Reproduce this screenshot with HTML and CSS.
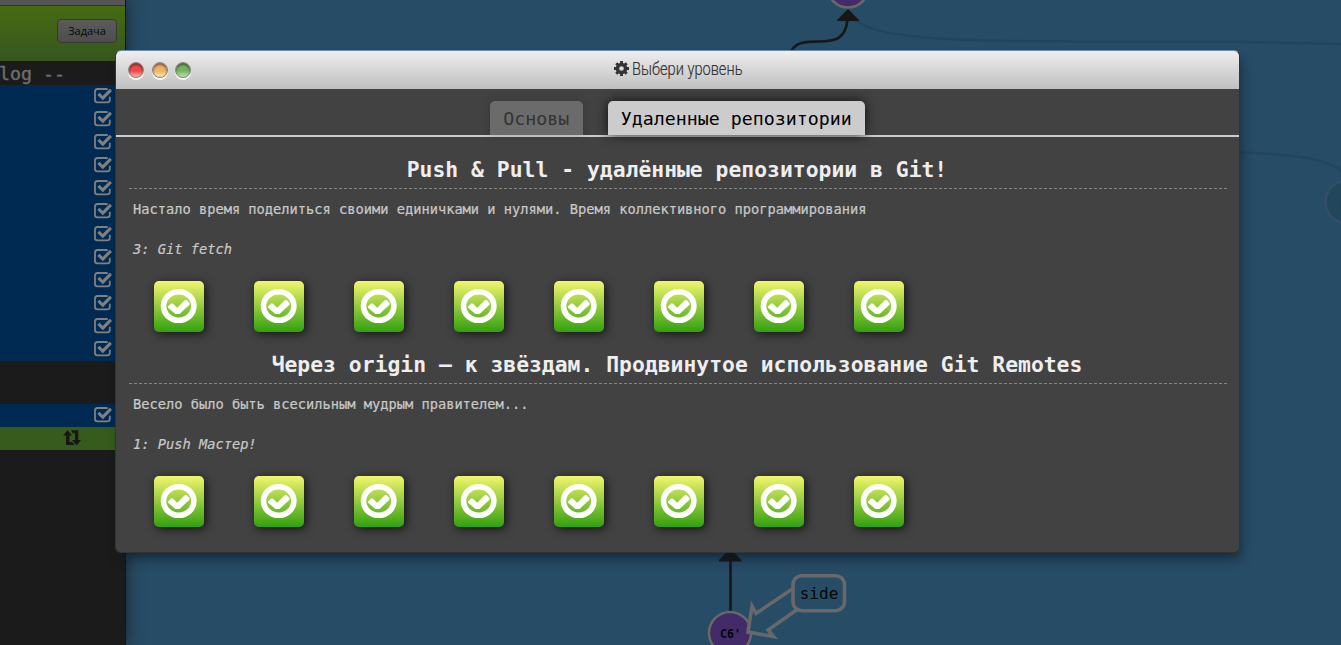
FILE: index.html
```html
<!DOCTYPE html>
<html lang="ru">
<head>
<meta charset="utf-8">
<title>Выбери уровень</title>
<link rel="stylesheet" href="styles.css">
</head>
<body>
<svg class="defs" aria-hidden="true">
  <symbol id="box" viewBox="0 0 18 16"><path d="M13.6 1.7Q13.2 1 12.3 1H3.4Q1 1 1 3.4V12.1Q1 14.4 3.4 14.4H13.4Q15.8 14.4 15.8 12.1V8.8" fill="none" stroke="currentColor" stroke-width="1.8"/><path d="M4.4 5.8L8.8 10L16.9 1.8" fill="none" stroke="currentColor" stroke-width="3.1"/></symbol>
  <symbol id="done" viewBox="0 0 50 51"><ellipse cx="24.7" cy="25" rx="15.2" ry="14.3" fill="none" stroke="#fff" stroke-width="5.6"/><path d="M14 25.5L17 22.4L18.8 22.6L23.2 26.7L31 19L32.6 19L35.6 22.1L35.4 23.7L26.6 32.1Q26 32.9 25 33H21.9Q21 32.9 20.3 32.1L14.1 26.8Z" fill="#fff"/></symbol>
</svg>
<div class="app">
  <aside class="sidebar">
    <div class="strip"></div>
    <div class="toolbar"><span class="task">Задача</span></div>
    <div class="log">log --</div>
    <div class="commands" id="commands"></div>
    <div class="gap"></div>
    <div class="row"><svg><use href="#box"/></svg></div>
    <div class="row active"><svg viewBox="0 0 18 16"><path d="M0 5.5L4.6 .3L9 5.5H6.5V12H9.5L11.5 15H3V5.5ZM8 .3H15.3V10H18L13.6 15.4L9 10H12V3.3H9.8Z" fill="#171717"/></svg></div>
  </aside>
  <main class="canvas">
    <svg class="graph" viewBox="126 0 1215 645">
      <g fill="none" stroke="#23455b" stroke-width="2.5">
        <path d="M848 10C862 45 960 41 1220 41.5Q1290 43 1341 44"/>
        <path d="M1230 152C1285 154 1325 156 1344 173"/>
        <circle cx="1347" cy="202" r="21.5" fill="#23475a" stroke="#334f67"/>
        <path d="M1342 197Q1338 201 1342 206"/>
      </g>
      <path d="M791 51C798 41 806 42 818 41.5C835 41 845 40 847.5 20" fill="none" stroke="#171717" stroke-width="2.6"/>
      <path d="M848 9L859 20V21H837V20Z" fill="#171717"/>
      <circle cx="848" cy="-13" r="20.5" fill="#432a68" stroke="#68676a" stroke-width="2.5"/>
      <path d="M730.5 560V615" stroke="#171717" stroke-width="2.6"/>
      <path d="M730 549L741.5 560V561.5H719V560Z" fill="#171717"/>
      <circle cx="730" cy="633" r="21" fill="#432a68" stroke="#68676a" stroke-width="2.5"/>
      <text class="commit" x="730.5" y="638" text-anchor="middle">C6'</text>
      <g fill="#274c65" stroke="#68676a" stroke-width="3.6">
        <path d="M793 588.5L756 613.5L752 606L748 632L773.5 636.5L768 630L798 609"/>
        <rect x="793" y="575.7" width="51.5" height="35" rx="9"/>
      </g>
      <text class="branch" x="819" y="599" text-anchor="middle">side</text>
    </svg>
  </main>
</div>
<section class="window">
  <header class="titlebar">
    <div class="lights"><i class="red"></i><i class="amber"></i><i class="green"></i></div>
    <h1><svg class="gear" viewBox="-7 -7 14 14"><circle r="3.8" fill="none" stroke="#333" stroke-width="3.2"/><path d="M0-7V-4M0 4V7M-7 0H-4M4 0H7M-4.9-4.9L-3-3M3 3L4.9 4.9M-4.9 4.9L-3 3M3-3L4.9-4.9" stroke="#333" stroke-width="2.7"/></svg><span class="title">Выбери уровень</span></h1>
  </header>
  <nav class="tabs"><div class="tab">Основы</div><div class="tab selected">Удаленные репозитории</div></nav>
  <div class="content">
    <article class="series">
      <h2>Push &amp; Pull - удалённые репозитории в Git!</h2>
      <p>Настало время поделиться своими единичками и нулями. Время коллективного программирования</p>
      <p class="name">3: Git fetch</p>
      <div class="levels"></div>
    </article>
    <article class="series">
      <h2>Через origin – к звёздам. Продвинутое использование Git Remotes</h2>
      <p>Весело было быть всесильным мудрым правителем...</p>
      <p class="name">1: Push Мастер!</p>
      <div class="levels"></div>
    </article>
  </div>
</section>
<script src="levels.js"></script>
</body>
</html>
```

FILE: styles.css
```css
* { box-sizing: border-box; }
body { margin: 0; height: 645px; overflow: hidden; position: relative; font-family: "DejaVu Sans Mono", monospace; }
.defs { display: none; }
.app { display: flex; height: 645px; background: #274c65; }
.sidebar { width: 126px; flex: none; background: #1b1b1b; border-right: 1px solid #151515; box-shadow: 0 0 14px rgba(25,30,35,.9); z-index: 1; overflow: visible; }
.strip { height: 6px; background: #555; border-bottom: 1px solid #343434; }
.toolbar { height: 55px; padding: 13px 8px 0 0; display: flex; justify-content: flex-end; align-items: flex-start; background: linear-gradient(#466b12, #36561f); }
.task { width: 60px; height: 24px; border: 1px solid #383838; border-radius: 4px; background: linear-gradient(#5b5b5b, #4d4d4d); font: 11px/22px "Open Sans", sans-serif; text-align: center; color: #080808; }
.log { height: 24px; line-height: 25px; margin-left: -1px; font-size: 18.27px; color: #6e6e6e; -webkit-text-stroke: .4px #6e6e6e; }
.row { height: 23px; padding: 3px 13px 0 0; background: #002a52; color: #808080; text-align: right; line-height: 0; }
.row svg { width: 18px; height: 16px; }
.gap { height: 43px; }
.row.active { background: #365b1c; padding-right: 44px; }
.canvas { flex: 1; }
.graph { display: block; width: 1215px; height: 645px; }
.commit { font-size: 11.5px; font-weight: bold; fill: #060606; }
.branch { font-size: 16px; fill: #060606; }
.window { position: absolute; z-index: 2; left: 115px; top: 50px; width: 1125px; height: 503px; border: 1px solid #333; border-top-color: #688caa; border-radius: 6px; background: #424242; box-shadow: 3px 8px 12px -3px rgba(10,20,35,.65); }
.titlebar { height: 38px; display: grid; grid-template-columns: 1fr auto 1fr; border-radius: 5px 5px 0 0; background: linear-gradient(#efedee, #c0c0c0); }
.lights { display: flex; gap: 7.5px; padding: 11px 0 0 12px; }
.lights i { width: 16px; height: 16px; border-radius: 50%; border: 1px solid #8b8585; box-shadow: inset 0 2px 2px rgba(40,30,30,.55), 0 2px 0 #f8f8f8; }
.red { background: linear-gradient(#ed4848 55%, #ffb0a8); }
.amber { background: linear-gradient(#edb463 55%, #ffe4b0); }
.green { background: linear-gradient(#72b55f 55%, #b9e2aa); }
h1 { margin: 0; width: 128px; height: 35px; display: flex; align-items: center; gap: 3px; color: #333; font: 300 18.5px "Roboto", sans-serif; white-space: nowrap; }
.gear { width: 15px; height: 15px; flex: none; }
.title { transform: scaleX(.79); transform-origin: left; -webkit-text-stroke: .2px #333; }
.tabs { height: 48px; display: flex; justify-content: center; align-items: flex-end; gap: 25px; border-bottom: 2px solid #ccc; font-size: 18.27px; }
.tab { height: 34px; padding: 0 13.2px; line-height: 35px; border-radius: 5px 5px 0 0; background: #6b6b6b; color: #333; white-space: nowrap; box-shadow: 0 0 8px rgba(0,0,0,.18); }
.selected { background: #ccc; color: #000; box-shadow: 0 0 12px rgba(0,0,0,.8); }
.content { padding: 13px 12px 0 13px; color: #c8c8c8; font-size: 13.7px; }
.series { height: 195px; }
h2 { margin: 0; height: 39px; line-height: 40px; padding-right: 2px; border-bottom: 1px dashed #858585; font-size: 21.38px; text-align: center; white-space: nowrap; color: #eee; }
p { margin: 0; padding: 0 4px; height: 40px; line-height: 40px; white-space: nowrap; -webkit-text-stroke: .2px #c8c8c8; }
.name { font-style: italic; }
.levels { display: flex; gap: 50px; padding: 12px 0 0 25px; }
.level { width: 50px; height: 51px; border-radius: 5px; background: linear-gradient(#f2f66c, #32a00f); box-shadow: 2px 2px 10px rgba(0,0,0,.7); }
.level svg { display: block; width: 50px; height: 51px; }
```

FILE: levels.js
```js
document.getElementById('commands').innerHTML =
  '<div class="row"><svg><use href="#box"/></svg></div>'.repeat(12);
document.querySelectorAll('.levels').forEach(function (list) {
  list.innerHTML = '<div class="level"><svg><use href="#done"/></svg></div>'.repeat(8);
});
```
